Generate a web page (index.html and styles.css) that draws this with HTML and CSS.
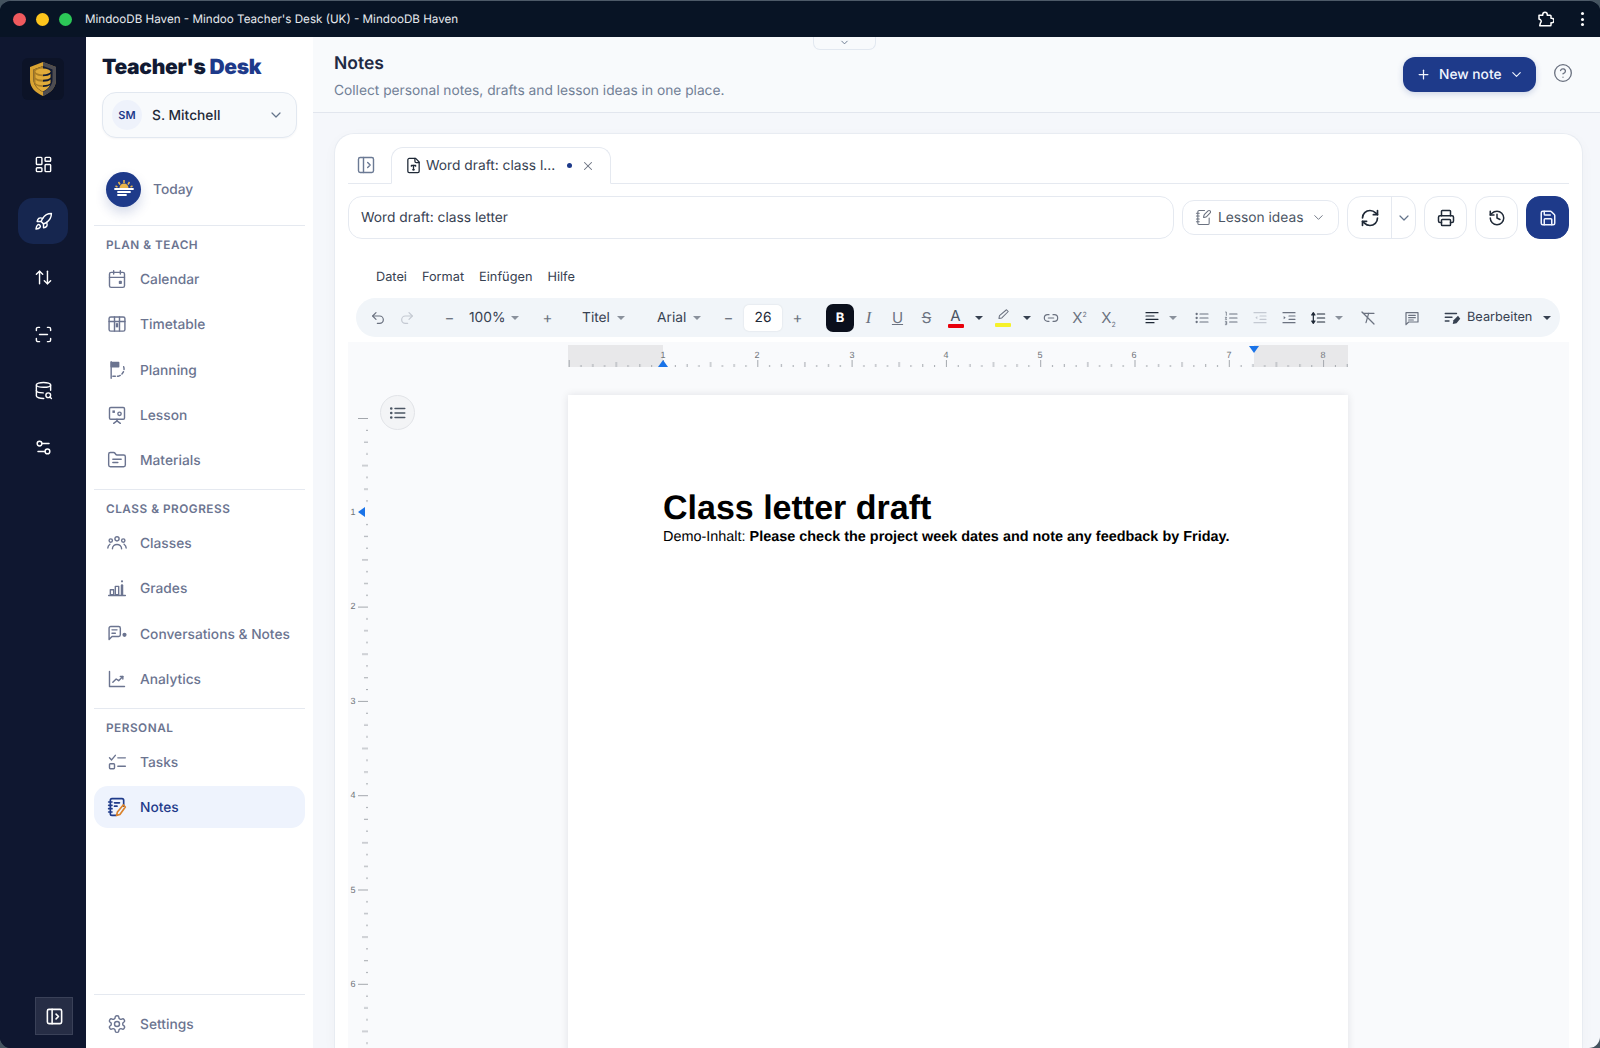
FILE: index.html
```html
<!DOCTYPE html>
<html lang="en">
<head>
    <meta charset="UTF-8">
    <meta name="viewport" content="width=device-width, initial-scale=1.0">
    <title>MindooDB Haven - Mindoo Teacher's Desk (UK) - MindooDB Haven</title>
    <link rel="stylesheet" href="styles.css">
</head>
<body>
<div class="window">
    <div class="titlebar">
        <span class="light red"></span><span class="light yellow"></span><span class="light green"></span>
        <span class="window-title">MindooDB Haven - Mindoo Teacher's Desk (UK) - MindooDB Haven</span>
        <svg class="ext-icon" viewBox="0 0 24 24"><path d="M4 7h5V6a3 3 0 0 1 6 0v1h4a1 1 0 0 1 1 1v3h1a3 3 0 0 1 0 6h-1v3a1 1 0 0 1-1 1H5l1-4a2.500 2.500 0 0 0 0-4l-2-1z"/></svg>
        <span class="kebab"><i></i><i></i><i></i></span>
    </div>
    <div class="app">
        <!-- icon rail -->
        <div class="rail">
            <div class="rail-logo">
                <svg viewBox="0 0 30 36" width="30" height="36">
                    <path d="M15 1 28 6v13c0 8-6 13-13 16C8 32 2 27 2 19V6z" fill="#d9a332"/>
                    <path d="M15 1 28 6v13c0 8-6 13-13 16z" fill="#1d2f5c" opacity=".75"/>
                    <path d="M15 5 24.500 8.500v10c0 6-4.500 10-9.500 12.500-5-2.500-9.500-6.500-9.500-12.500v-10z" fill="#111a33"/>
                    <path d="M5.500 8.500 15 5v26c-5-2.500-9.500-6.500-9.500-12.500z" fill="#a97d26"/>
                    <ellipse cx="15" cy="10.500" rx="7.500" ry="3" fill="#e0ab3a"/>
                    <path d="M7.500 13c2 3 13 3 15 0v3.500c-2 3-13 3-15 0zM7.500 18.500c2 3 13 3 15 0V22c-2 3-13 3-15 0zM8 24c2.500 2.500 11.500 2.500 14 0-1 3-4 5-7 6.500-3-1.500-6-3.500-7-6.500z" fill="#e0ab3a"/>
                </svg>
            </div>
            <div class="rail-items">
                <span class="rail-btn"><svg class="ico" viewBox="0 0 24 24"><rect x="3" y="3" width="7" height="9" rx="1"/><rect x="14" y="3" width="7" height="5" rx="1"/><rect x="14" y="12" width="7" height="9" rx="1"/><rect x="3" y="16" width="7" height="5" rx="1"/></svg></span>
                <span class="rail-btn active"><svg class="ico" viewBox="0 0 24 24"><path d="M4.500 16.500c-1.500 1.260-2 5-2 5s3.740-.5 5-2c.71-.84.7-2.130-.09-2.910a2.180 2.180 0 0 0-2.910-.09z"/><path d="m12 15-3-3a22 22 0 0 1 2-3.950A12.880 12.880 0 0 1 22 2c0 2.720-.78 7.500-6 11a22.350 22.350 0 0 1-4 2z"/><path d="M9 12H4s.55-3.030 2-4c1.620-1.080 5 0 5 0"/><path d="M12 15v5s3.030-.55 4-2c1.080-1.620 0-5 0-5"/></svg></span>
                <span class="rail-btn"><svg class="ico" viewBox="0 0 24 24"><path d="m21 16-4 4-4-4"/><path d="M17 20V4"/><path d="m3 8 4-4 4 4"/><path d="M7 4v16"/></svg></span>
                <span class="rail-btn"><svg class="ico" viewBox="0 0 24 24"><path d="M3 7V5a2 2 0 0 1 2-2h2"/><path d="M17 3h2a2 2 0 0 1 2 2v2"/><path d="M21 17v2a2 2 0 0 1-2 2h-2"/><path d="M7 21H5a2 2 0 0 1-2-2v-2"/><path d="M7 12h10"/></svg></span>
                <span class="rail-btn"><svg class="ico" viewBox="0 0 24 24"><ellipse cx="12" cy="5" rx="9" ry="3"/><path d="M21 11.693V5"/><path d="m22 22-1.875-1.875"/><path d="M3 12a9 3 0 0 0 8.697 2.998"/><path d="M3 5v14a9 3 0 0 0 9.280 2.999"/><circle cx="18" cy="18" r="3"/></svg></span>
                <span class="rail-btn"><svg class="ico" viewBox="0 0 24 24"><path d="M14 17H5"/><path d="M19 7h-9"/><circle cx="17" cy="17" r="3"/><circle cx="7" cy="7" r="3"/></svg></span>
            </div>
            <span class="rail-collapse"><svg class="ico" viewBox="0 0 24 24"><rect x="3" y="3" width="18" height="18" rx="2"/><path d="M9 3v18"/><path d="m14 9 3 3-3 3"/></svg></span>
        </div>

        <!-- sidebar -->
        <div class="sidebar">
            <div class="brand">Teacher's <span>Desk</span></div>
            <div class="account">
                <span class="avatar">SM</span>
                <span class="account-name">S. Mitchell</span>
                <svg class="ico chev" viewBox="0 0 24 24"><path d="m6 9 6 6 6-6"/></svg>
            </div>
            <div class="today">
                <span class="today-icon">
                    <svg viewBox="0 0 24 24" width="24" height="24">
                        <path d="M7.500 11a4.500 4.500 0 0 1 9 0z" fill="#eab64a"/>
                        <path d="M12 3v3M6.500 5l1.500 2.500M17.500 5 16 7.500M3.500 9l2 1M20.500 9l-2 1" stroke="#eab64a" stroke-width="1.500" fill="none"/>
                        <path d="M3 12h18M6 15h12M6 18h8" stroke="#fff" stroke-width="1.800" fill="none" stroke-linecap="round"/>
                    </svg>
                </span>
                <span class="nudge">Today</span>
            </div>

            <div class="nav-section">
                <div class="nav-label">PLAN &amp; TEACH</div>
                <div class="nav-rows">
                    <a class="nav-row"><svg class="ico" viewBox="0 0 24 24"><path d="M8 2v4"/><path d="M16 2v4"/><rect x="3" y="4" width="18" height="18" rx="2"/><path d="M3 10h18"/><rect x="15" y="15" width="2" height="2" fill="currentColor"/></svg><span class="nudge">Calendar</span></a>
                    <a class="nav-row"><svg class="ico" viewBox="0 0 24 24"><rect x="2.500" y="3.500" width="19" height="17" rx="2"/><path d="M2.500 9h19"/><path d="M9 3.500v17"/><path d="M15 3.500v17"/><rect x="10.500" y="11" width="3" height="5" fill="currentColor" stroke="none"/></svg><span class="nudge">Timetable</span></a>
                    <a class="nav-row"><svg class="ico" viewBox="0 0 24 24"><path d="M5 2v20"/><path d="M5 3h9v5H5z" fill="currentColor"/><path d="M20 8a8 8 0 0 1-1.500 8 8 8 0 0 1-5 3.500H7" stroke-dasharray="3.500 2.500"/></svg><span class="nudge">Planning</span></a>
                    <a class="nav-row"><svg class="ico" viewBox="0 0 24 24"><rect x="3" y="3" width="18" height="14" rx="1.500"/><rect x="6.500" y="6.500" width="3" height="3" fill="currentColor" stroke="none"/><circle cx="15" cy="10.500" r="2"/><path d="M12 17v2"/><path d="m8 22 4-3 4 3"/></svg><span class="nudge">Lesson</span></a>
                    <a class="nav-row"><svg class="ico" viewBox="0 0 24 24"><path d="M20 20a2 2 0 0 0 2-2V8a2 2 0 0 0-2-2h-7.900a2 2 0 0 1-1.690-.9L9.600 3.900A2 2 0 0 0 7.930 3H4a2 2 0 0 0-2 2v13a2 2 0 0 0 2 2Z"/><path d="M7 11h10"/><path d="M7 15h6"/></svg><span class="nudge">Materials</span></a>
                </div>
            </div>

            <div class="nav-section">
                <div class="nav-label">CLASS &amp; PROGRESS</div>
                <div class="nav-rows">
                    <a class="nav-row"><svg class="ico" viewBox="0 0 24 24"><circle cx="12" cy="7" r="2.500"/><circle cx="4.500" cy="9" r="2"/><circle cx="19.500" cy="9" r="2"/><path d="M6.500 19c0-7 11-7 11 0"/><path d="M1 18c0-2 1-3.500 2.500-4.500"/><path d="M23 18c0-2-1-3.500-2.500-4.500"/></svg><span class="nudge">Classes</span></a>
                    <a class="nav-row"><svg class="ico" viewBox="0 0 24 24"><path d="M2 21h20"/><rect x="4" y="14" width="4" height="6"/><rect x="10" y="10" width="4" height="10"/><path d="M18 9v11" stroke-width="3"/><circle cx="18" cy="4" r="1.300" fill="currentColor" stroke="none"/></svg><span class="nudge">Grades</span></a>
                    <a class="nav-row"><svg class="ico" viewBox="0 0 24 24"><path d="M16 13a2 2 0 0 1-2 2H6l-3.500 3.500V5a2 2 0 0 1 2-2H14a2 2 0 0 1 2 2z"/><path d="M6 7h6"/><path d="M6 11h4"/><circle cx="21" cy="13" r="2.500" fill="currentColor" stroke="none"/></svg><span class="nudge">Conversations &amp; Notes</span></a>
                    <a class="nav-row"><svg class="ico" viewBox="0 0 24 24"><path d="M3 3v18h18"/><path d="m7 16 4-4 3 2 5-5"/><path d="M16 9h3v3"/></svg><span class="nudge">Analytics</span></a>
                </div>
            </div>

            <div class="nav-section">
                <div class="nav-label">PERSONAL</div>
                <div class="nav-rows">
                    <a class="nav-row"><svg class="ico" viewBox="0 0 24 24"><path d="m3 7 2.500 2.500L10 4"/><rect x="3" y="14" width="6" height="6" rx="1"/><path d="M13 7h9"/><path d="M13 17h9"/></svg><span class="nudge">Tasks</span></a>
                    <a class="nav-row active"><svg class="ico" viewBox="0 0 24 24"><path d="M20 11V4a2 2 0 0 0-2-2H6a2 2 0 0 0-2 2v16a2 2 0 0 0 2 2h5"/><path d="M2 6h4"/><path d="M2 10h4"/><path d="M2 14h4"/><path d="M2 18h4"/><path d="M9 7h6"/><path d="M9 11h3"/><path d="m22 12-2.500-2.500L12.500 18l-1 4 4-1z" stroke="#d9822b"/></svg><span class="nudge">Notes</span></a>
                </div>
            </div>

            <div class="side-footer">
                <a class="nav-row"><svg class="ico" viewBox="0 0 24 24"><path d="M12.220 2h-.44a2 2 0 0 0-2 2v.18a2 2 0 0 1-1 1.730l-.43.25a2 2 0 0 1-2 0l-.15-.08a2 2 0 0 0-2.730.73l-.22.38a2 2 0 0 0 .73 2.730l.15.1a2 2 0 0 1 1 1.720v.51a2 2 0 0 1-1 1.740l-.15.09a2 2 0 0 0-.73 2.730l.22.38a2 2 0 0 0 2.730.73l.15-.08a2 2 0 0 1 2 0l.43.25a2 2 0 0 1 1 1.730V20a2 2 0 0 0 2 2h.44a2 2 0 0 0 2-2v-.18a2 2 0 0 1 1-1.730l.43-.25a2 2 0 0 1 2 0l.15.08a2 2 0 0 0 2.730-.73l.22-.39a2 2 0 0 0-.73-2.730l-.15-.08a2 2 0 0 1-1-1.740v-.5a2 2 0 0 1 1-1.740l.15-.09a2 2 0 0 0 .73-2.730l-.22-.38a2 2 0 0 0-2.730-.73l-.15.08a2 2 0 0 1-2 0l-.43-.25a2 2 0 0 1-1-1.730V4a2 2 0 0 0-2-2z"/><circle cx="12" cy="12" r="3"/></svg><span class="nudge">Settings</span></a>
            </div>
        </div>

        <!-- main area -->
        <div class="main">
            <span class="notch"><svg class="ico" viewBox="0 0 24 24"><path d="m6 9 6 6 6-6"/></svg></span>
            <div class="header">
                <div class="header-text">
                    <div class="page-title">Notes</div>
                    <div class="page-sub">Collect personal notes, drafts and lesson ideas in one place.</div>
                </div>
                <div class="new-note">
                    <svg class="ico plus" viewBox="0 0 24 24"><path d="M5 12h14"/><path d="M12 5v14"/></svg>
                    <span class="nudge">New note</span>
                    <svg class="ico chev" viewBox="0 0 24 24"><path d="m6 9 6 6 6-6"/></svg>
                </div>
                <svg class="ico help" viewBox="0 0 24 24"><circle cx="12" cy="12" r="10"/><path d="M9.090 9a3 3 0 0 1 5.830 1c0 2-3 3-3 3"/><path d="M12 17h.01"/></svg>
            </div>

            <div class="card">
                <div class="tabstrip">
                    <svg class="ico tab-toggle" viewBox="0 0 24 24"><rect x="3" y="3" width="18" height="18" rx="2"/><path d="M9 3v18"/><path d="m14 9 3 3-3 3"/></svg>
                    <div class="tab">
                        <svg class="ico" viewBox="0 0 24 24"><path d="M15 2H6a2 2 0 0 0-2 2v16a2 2 0 0 0 2 2h12a2 2 0 0 0 2-2V7Z"/><path d="M14 2v4a2 2 0 0 0 2 2h4"/><path d="M9 13v-1h6v1"/><path d="M12 12v6"/><path d="M11 18h2"/></svg>
                        <span class="tab-name">Word draft: class l...</span>
                        <span class="tab-dot"></span>
                        <svg class="ico tab-close" viewBox="0 0 24 24"><path d="M18 6 6 18"/><path d="m6 6 12 12"/></svg>
                    </div>
                </div>

                <div class="title-row">
                    <div class="title-input">Word draft: class letter</div>
                    <div class="category">
                        <svg class="ico" viewBox="0 0 24 24"><path d="M13.400 2H6a2 2 0 0 0-2 2v16a2 2 0 0 0 2 2h12a2 2 0 0 0 2-2v-7.400"/><path d="M2 6h4"/><path d="M2 10h4"/><path d="M2 14h4"/><path d="M2 18h4"/><path d="M21.378 5.626a1 1 0 1 0-3.004-3.004l-5.010 5.012a2 2 0 0 0-.506.854l-.837 2.870a.5.5 0 0 0 .62.62l2.870-.837a2 2 0 0 0 .854-.506z"/></svg>
                        <span>Lesson ideas</span>
                        <svg class="ico chev" viewBox="0 0 24 24"><path d="m6 9 6 6 6-6"/></svg>
                    </div>
                    <div class="split">
                        <span class="split-main"><svg class="ico" viewBox="0 0 24 24"><path d="M3 12a9 9 0 0 1 9-9 9.750 9.750 0 0 1 6.740 2.740L21 8"/><path d="M21 3v5h-5"/><path d="M21 12a9 9 0 0 1-9 9 9.750 9.750 0 0 1-6.740-2.740L3 16"/><path d="M8 16H3v5"/></svg></span>
                        <span class="split-arrow"><svg class="ico chev" viewBox="0 0 24 24"><path d="m6 9 6 6 6-6"/></svg></span>
                    </div>
                    <span class="square-btn"><svg class="ico" viewBox="0 0 24 24"><path d="M6 18H4a2 2 0 0 1-2-2v-5a2 2 0 0 1 2-2h16a2 2 0 0 1 2 2v5a2 2 0 0 1-2 2h-2"/><path d="M6 9V3a1 1 0 0 1 1-1h10a1 1 0 0 1 1 1v6"/><rect x="6" y="14" width="12" height="8" rx="1"/></svg></span>
                    <span class="square-btn"><svg class="ico" viewBox="0 0 24 24"><path d="M3 12a9 9 0 1 0 9-9 9.750 9.750 0 0 0-6.740 2.740L3 8"/><path d="M3 3v5h5"/><path d="M12 7v5l4 2"/></svg></span>
                    <span class="square-btn save"><svg class="ico" viewBox="0 0 24 24"><path d="M15.200 3a2 2 0 0 1 1.400.6l3.800 3.800a2 2 0 0 1 .6 1.400V19a2 2 0 0 1-2 2H5a2 2 0 0 1-2-2V5a2 2 0 0 1 2-2z"/><path d="M17 21v-7a1 1 0 0 0-1-1H8a1 1 0 0 0-1 1v7"/><path d="M7 3v4a1 1 0 0 0 1 1h7"/></svg></span>
                </div>

                <div class="menubar">
                    <span>Datei</span><span>Format</span><span>Einfügen</span><span>Hilfe</span>
                </div>

                <div class="toolbar">
                    <span class="tb"><svg class="ico" viewBox="0 0 24 24"><path d="M9 14 4 9l5-5"/><path d="M4 9h10.500a5.500 5.500 0 0 1 0 11H11"/></svg></span>
                    <span class="tb off"><svg class="ico" viewBox="0 0 24 24"><path d="m15 14 5-5-5-5"/><path d="M20 9H9.500a5.500 5.500 0 0 0 0 11H13"/></svg></span>
                    <span class="tb sign g14">−</span>
                    <span class="dd dd-zoom">100%<i class="caret"></i></span>
                    <span class="tb sign">+</span>
                    <span class="dd dd-style">Titel<i class="caret"></i></span>
                    <span class="dd dd-font">Arial<i class="caret"></i></span>
                    <span class="tb sign">−</span>
                    <span class="size-input">26</span>
                    <span class="tb sign">+</span>
                    <span class="bold-btn">B</span>
                    <span class="tb glyph italic">I</span>
                    <span class="tb glyph underline">U</span>
                    <span class="tb glyph strike">S</span>
                    <span class="tb color-a">A<i></i></span>
                    <span class="tb-caret"><i class="caret dark"></i></span>
                    <span class="tb hl"><svg class="ico" viewBox="0 0 24 24"><path d="M18 3 21 6 10 17l-5 1 1-5z"/></svg><i></i></span>
                    <span class="tb-caret wide"><i class="caret dark"></i></span>
                    <span class="tb"><svg class="ico" viewBox="0 0 24 24"><path d="M9 17H7A5 5 0 0 1 7 7h2"/><path d="M15 7h2a5 5 0 1 1 0 10h-2"/><path d="M8 12h8"/></svg></span>
                    <span class="tb glyph script"><span>X<sup>2</sup></span></span>
                    <span class="tb glyph script"><span>X<sub>2</sub></span></span>
                    <span class="tb dark-ico g14"><svg class="ico" viewBox="0 0 24 24"><path d="M3 4h18M3 9h12M3 14h18M3 19h12"/></svg></span>
                    <span class="tb-caret tight"><i class="caret"></i></span>
                    <span class="tb g7"><svg class="ico" viewBox="0 0 24 24"><path d="M9 6h12M9 12h12M9 18h12"/><path d="M4 6h.01M4 12h.01M4 18h.01" stroke-width="3.500"/></svg></span>
                    <span class="tb"><svg class="ico" viewBox="0 0 24 24"><path d="M10 6h11M10 12h11M10 18h11"/><path d="M4 3h1v5M3.500 11h2L3.500 14h2M3.500 17h2v5h-2M3.500 19.500h2" stroke-width="1.200"/></svg></span>
                    <span class="tb off"><svg class="ico" viewBox="0 0 24 24"><path d="M3 4h18M12 9h9M12 14h9M3 19h18"/><path d="M8 9l-3 2.500L8 14z" fill="currentColor" stroke="none"/></svg></span>
                    <span class="tb"><svg class="ico" viewBox="0 0 24 24"><path d="M3 4h18M12 9h9M12 14h9M3 19h18"/><path d="M4 9l3 2.500L4 14z" fill="currentColor" stroke="none"/></svg></span>
                    <span class="tb dark-ico"><svg class="ico" viewBox="0 0 24 24"><path d="M11 6h11M11 12h11M11 18h11"/><path d="M5 5v14"/><path d="M2.500 7.500 5 4l2.500 3.500z M2.500 16.500 5 20l2.500-3.500z" fill="currentColor"/></svg></span>
                    <span class="tb-caret tight"><i class="caret"></i></span>
                    <span class="tb g7"><svg class="ico" viewBox="0 0 24 24"><path d="M5 5h16"/><path d="M13 5 9 19"/><path d="m3 3 18 18"/></svg></span>
                    <span class="tb g15"><svg class="ico" viewBox="0 0 24 24"><path d="M21 4H3v18l4-4h14z"/><path d="M7 8h10M7 11.500h10M7 15h7"/></svg></span>
                    <span class="edit-mode">
                        <svg class="ico" viewBox="0 0 24 24"><path d="M3 6h15M3 11h9M3 16h5"/><path d="M20 9 14 15l-1 5 5-1 5-6z" fill="currentColor" stroke="none"/></svg>
                        <span>Bearbeiten</span>
                        <i class="caret dark"></i>
                    </span>
                </div>

                <div class="editor">
                    <svg class="h-ruler" viewBox="348 342 1221 25" width="1221" height="25">
                        <defs>
                            <pattern id="h-ticks" patternUnits="userSpaceOnUse" x="663" y="342" width="94.300" height="25">
                                <rect x="0" y="18" width="1" height="7" fill="#a3a7ad"/>
                                <rect x="11.800" y="23" width="1" height="2" fill="#a3a7ad"/>
                                <rect x="23.600" y="22" width="1" height="3" fill="#a3a7ad"/>
                                <rect x="35.400" y="23" width="1" height="2" fill="#a3a7ad"/>
                                <rect x="47.100" y="20" width="1" height="5" fill="#a3a7ad"/>
                                <rect x="58.900" y="23" width="1" height="2" fill="#a3a7ad"/>
                                <rect x="70.700" y="22" width="1" height="3" fill="#a3a7ad"/>
                                <rect x="82.500" y="23" width="1" height="2" fill="#a3a7ad"/>
                            </pattern>
                        </defs>
                        <rect x="568" y="345" width="95" height="22" fill="#e8e8ea"/>
                        <rect x="1254" y="345" width="94" height="22" fill="#e8e8ea"/>
                        <rect x="568" y="342" width="780" height="25" fill="url(#h-ticks)"/>
                        <g class="ruler-num" text-anchor="middle">
                            <text x="663" y="358">1</text><text x="757" y="358">2</text><text x="852" y="358">3</text><text x="946" y="358">4</text><text x="1040" y="358">5</text><text x="1134" y="358">6</text><text x="1229" y="358">7</text><text x="1323" y="358">8</text>
                        </g>
                        <path d="M663 360l5 7h-10z" fill="#1a73e8"/>
                        <path d="M1254 353l-5-7h10z" fill="#1a73e8"/>
                    </svg>
                    <div class="doc-row">
                        <svg class="v-ruler" viewBox="348 395 22 660" width="22" height="660">
                            <defs>
                                <pattern id="v-ticks" patternUnits="userSpaceOnUse" x="348" y="418" width="22" height="94.300">
                                    <rect x="10" y="0" width="10" height="1" fill="#a3a7ad"/>
                                    <rect x="18" y="11.800" width="2" height="1" fill="#a3a7ad"/>
                                    <rect x="16" y="23.600" width="4" height="1" fill="#a3a7ad"/>
                                    <rect x="18" y="35.400" width="2" height="1" fill="#a3a7ad"/>
                                    <rect x="14" y="47.100" width="6" height="1" fill="#a3a7ad"/>
                                    <rect x="18" y="58.900" width="2" height="1" fill="#a3a7ad"/>
                                    <rect x="16" y="70.700" width="4" height="1" fill="#a3a7ad"/>
                                    <rect x="18" y="82.500" width="2" height="1" fill="#a3a7ad"/>
                                </pattern>
                            </defs>
                            <rect x="348" y="418" width="22" height="640" fill="url(#v-ticks)"/>
                            <g class="ruler-num" text-anchor="middle">
                                <text x="353" y="515">1</text><text x="353" y="609">2</text><text x="353" y="704">3</text><text x="353" y="798">4</text><text x="353" y="893">5</text><text x="353" y="987">6</text>
                            </g>
                            <rect x="356" y="505" width="14" height="14" fill="#f9fafc"/>
                            <path d="M358 512l7-5v10z" fill="#1a73e8"/>
                        </svg>
                        <span class="outline-btn"><svg class="ico" viewBox="0 0 24 24"><path d="M8 6h13M8 12h13M8 18h13"/><path d="M3 6h.01M3 12h.01M3 18h.01" stroke-width="3.500"/></svg></span>
                        <div class="page">
                            <h1>Class letter draft</h1>
                            <p>Demo-Inhalt: <strong>Please check the project week dates and note any feedback by Friday.</strong></p>
                        </div>
                    </div>
                </div>
            </div>
        </div>
    </div>
</div>
</body>
</html>
```
FILE: styles.css
```css
* {
    box-sizing: border-box;
}
html, body {
    height: 100%;
}
body {
    margin: 0;
    background: #44535f;
    font-family: Inter, "Noto Sans", sans-serif;
    text-rendering: geometricPrecision;
    overflow: hidden;
}
.window {
    height: 100vh;
    display: flex;
    flex-direction: column;
    border-radius: 11px;
    border-top: 1px solid #4d5a68;
    overflow: hidden;
    background: #081425;
}
.ico {
    width: 20px;
    height: 20px;
    fill: none;
    stroke: currentColor;
    stroke-width: 2;
    stroke-linecap: round;
    stroke-linejoin: round;
    flex-shrink: 0;
}
/* Inter sits a touch high in centred rows */
.nudge {
    padding-top: 2px;
}

/* title bar */
.titlebar {
    height: 36px;
    display: flex;
    align-items: center;
    padding: 0 12px 0 13px;
    background: #081425;
    color: #e6e9ee;
    flex-shrink: 0;
}
.light {
    width: 13px;
    height: 13px;
    border-radius: 50%;
    margin-right: 10px;
}
.light.red { background: #f05a5e; }
.light.yellow { background: #fdc51c; }
.light.green { background: #2cc757; }
.window-title {
    font-size: 11.650px;
    margin-left: 3px;
    white-space: nowrap;
}
.ext-icon {
    width: 18px;
    height: 18px;
    margin-left: auto;
    fill: none;
    stroke: #fff;
    stroke-width: 2;
    stroke-linejoin: round;
}
.kebab {
    display: flex;
    flex-direction: column;
    gap: 2.500px;
    margin: 0 4px 0 27px;
}
.kebab i {
    width: 3px;
    height: 3px;
    border-radius: 50%;
    background: #fff;
}

.app {
    flex: 1;
    display: flex;
    min-height: 0;
}

/* rail */
.rail {
    width: 86px;
    background: #0f1730;
    display: flex;
    flex-direction: column;
    align-items: center;
    flex-shrink: 0;
}
.rail-logo {
    width: 42px;
    height: 42px;
    margin-top: 21px;
    background: #0c1327;
    border-radius: 6px;
    display: flex;
    align-items: center;
    justify-content: center;
}
.rail-items {
    margin-top: 41.500px;
    display: flex;
    flex-direction: column;
    gap: 10.600px;
    color: #fff;
}
.rail-btn {
    width: 50px;
    height: 46px;
    display: flex;
    align-items: center;
    justify-content: center;
    border-radius: 15px;
}
.rail-btn .ico {
    width: 19px;
    height: 19px;
    stroke-width: 1.800;
}
.rail-btn.active {
    background: #16264f;
}
.rail-collapse {
    margin: auto 0 13px 22px;
    width: 38px;
    height: 38px;
    display: flex;
    align-items: center;
    justify-content: center;
    background: #262d45;
    border: 1px solid #3a4158;
    color: #fff;
}
.rail-collapse .ico {
    width: 19px;
    height: 19px;
}

/* sidebar */
.sidebar {
    width: 227px;
    padding: 0 8px;
    background: #fff;
    display: flex;
    flex-direction: column;
    flex-shrink: 0;
    box-shadow: 1px 0 0 #eef1f6;
}
.brand {
    margin: 17px 0 0 8px;
    font-size: 21px;
    line-height: 28px;
    font-weight: 900;
    letter-spacing: -0.300px;
    color: #111a33;
    white-space: nowrap;
}
.brand span {
    color: #1e3a8a;
}
.account {
    margin: 10px 8px 0;
    height: 46px;
    display: flex;
    align-items: center;
    padding: 0 12px 0 9px;
    background: #f8fafc;
    border: 1px solid #e2e8f0;
    border-radius: 14px;
    box-shadow: 0 1px 2px rgba(15, 23, 42, 0.04);
}
.avatar {
    width: 30px;
    height: 30px;
    border-radius: 50%;
    background: #eef2fb;
    color: #1e3a8a;
    font-size: 11px;
    font-weight: 600;
    display: flex;
    align-items: center;
    justify-content: center;
}
.account-name {
    margin-left: 10px;
    padding-top: 1px;
    font-size: 13.750px;
    font-weight: 450;
    color: #1f2937;
    flex: 1;
}
.chev {
    width: 16px;
    height: 16px;
    color: #64748b;
    stroke-width: 1.800;
}
.today {
    margin: 30px 0 15px 12px;
    height: 42px;
    display: flex;
    align-items: center;
    gap: 12px;
    font-size: 13.750px;
    font-weight: 500;
    color: #6b7490;
}
.today-icon {
    width: 35px;
    height: 35px;
    border-radius: 50%;
    background: #1e3a8a;
    display: flex;
    align-items: center;
    justify-content: center;
    box-shadow: 0 6px 12px rgba(30, 58, 138, 0.18);
}
.nav-section {
    border-top: 1px solid #e5e9f0;
    padding: 11px 0 8px;
}
.nav-label {
    padding-left: 12px;
    font-size: 11.800px;
    line-height: 16px;
    font-weight: 600;
    letter-spacing: 0.500px;
    color: #6b7490;
    margin-bottom: 5px;
}
.nav-rows {
    display: flex;
    flex-direction: column;
    gap: 3.250px;
}
.nav-row {
    height: 42px;
    padding-left: 13px;
    display: flex;
    align-items: center;
    gap: 13px;
    font-size: 13.750px;
    font-weight: 500;
    color: #6b7490;
    border-radius: 14px;
    white-space: nowrap;
}
.nav-row .ico {
    stroke-width: 1.700;
}
.nav-row.active {
    background: #eef3fd;
    color: #1e3a8a;
}
.nav-row.active .ico {
    stroke-width: 2;
}
.side-footer {
    margin-top: auto;
    border-top: 1px solid #e5e9f0;
    padding: 8px 0 3px;
}

/* main */
.main {
    flex: 1;
    min-width: 0;
    position: relative;
    display: flex;
    flex-direction: column;
    background: #f5f7fb;
}
.notch {
    position: absolute;
    left: 500px;
    top: 0;
    width: 63px;
    height: 13px;
    background: #f8fafc;
    border: 1px solid #e2e8f0;
    border-top: none;
    border-radius: 0 0 7px 7px;
    display: flex;
    justify-content: center;
    color: #64748b;
}
.notch .ico {
    width: 11px;
    height: 11px;
}
.header {
    height: 76px;
    flex-shrink: 0;
    display: flex;
    align-items: center;
    padding: 0 27px 0 21px;
    border-bottom: 1px solid #e2e6ee;
    background: #f8fafc;
}
.header-text {
    flex: 1;
    padding-top: 2px;
}
.page-title {
    font-size: 17.500px;
    line-height: 24px;
    font-weight: 600;
    color: #1f2a44;
}
.page-sub {
    margin-top: 6px;
    font-size: 13.750px;
    line-height: 18px;
    color: #718096;
}
.new-note {
    width: 133px;
    height: 35px;
    margin-top: -1px;
    border-radius: 12px;
    background: #1e3a8a;
    color: #f1f5ff;
    display: flex;
    align-items: center;
    padding: 0 12px 0 13px;
    font-size: 13.750px;
    font-weight: 500;
    box-shadow: 0 2px 6px rgba(30, 58, 138, 0.2);
}
.new-note .plus {
    width: 15px;
    height: 15px;
    margin-right: 8px;
}
.new-note .chev {
    margin-left: auto;
    color: #f1f5ff;
    width: 15px;
    height: 15px;
}
.help {
    margin: -3px 0 0 17px;
    width: 20px;
    height: 20px;
    color: #6b7280;
    stroke-width: 1.600;
}

/* editor card */
.card {
    flex: 1;
    min-height: 0;
    margin: 20px 17px 0 21px;
    padding: 0 13px;
    background: #fff;
    border: 1px solid #e8ecf2;
    border-bottom: none;
    border-radius: 20px 20px 0 0;
    display: flex;
    flex-direction: column;
    box-shadow: 0 4px 14px rgba(15, 23, 42, 0.03);
}
.tabstrip {
    height: 50px;
    flex-shrink: 0;
    display: flex;
    align-items: flex-end;
    border-bottom: 1px solid #e5e9f0;
}
.tab-toggle {
    width: 20px;
    height: 20px;
    margin: 0 0 8px 8px;
    color: #6b7a94;
    stroke-width: 1.700;
}
.tab {
    margin-left: 15px;
    margin-bottom: -1px;
    width: 220px;
    height: 37px;
    display: flex;
    align-items: center;
    padding-left: 13px;
    background: #fff;
    border: 1px solid #e5e9f0;
    border-bottom-color: #fff;
    border-radius: 12px 12px 0 0;
    font-size: 13.750px;
    color: #374151;
}
.tab .ico {
    width: 17px;
    height: 17px;
    stroke-width: 1.800;
    color: #1f2937;
}
.tab-name {
    margin-left: 4px;
    white-space: nowrap;
}
.tab-dot {
    width: 5px;
    height: 5px;
    border-radius: 50%;
    background: #1e3a8a;
    margin-left: 12px;
}
.tab .tab-close {
    width: 14px;
    height: 14px;
    margin-left: 9px;
    color: #6b7280;
}
.title-row {
    margin-top: 12px;
    height: 43px;
    flex-shrink: 0;
    display: flex;
    align-items: center;
    gap: 8px;
}
.title-input {
    flex: 1;
    height: 43px;
    line-height: 42px;
    padding-left: 12px;
    border: 1px solid #e5e9f0;
    border-radius: 14px;
    font-size: 13.750px;
    color: #374151;
}
.category {
    width: 157px;
    height: 35px;
    flex-shrink: 0;
    display: flex;
    align-items: center;
    padding: 0 12px;
    gap: 6px;
    border: 1px solid #e5e9f0;
    border-radius: 12px;
    font-size: 13.750px;
    color: #4b5563;
    white-space: nowrap;
}
.category .ico {
    width: 17px;
    height: 17px;
    stroke-width: 1.500;
    color: #6b7280;
}
.category .chev {
    width: 15px;
    height: 15px;
    margin-left: auto;
}
.split {
    width: 69px;
    height: 43px;
    flex-shrink: 0;
    display: flex;
    border: 1px solid #e5e9f0;
    border-radius: 14px;
}
.split-main {
    width: 44px;
    display: flex;
    align-items: center;
    justify-content: center;
    border-right: 1px solid #e5e9f0;
    color: #1f2937;
}
.split-arrow {
    flex: 1;
    display: flex;
    align-items: center;
    justify-content: center;
}
.split-main .ico {
    width: 20px;
    height: 20px;
}
.square-btn {
    width: 43px;
    height: 43px;
    flex-shrink: 0;
    display: flex;
    align-items: center;
    justify-content: center;
    border: 1px solid #e5e9f0;
    border-radius: 14px;
    color: #1f2937;
}
.square-btn .ico {
    width: 18px;
    height: 18px;
}
.square-btn.save {
    background: #1e3a8a;
    border-color: #1e3a8a;
    color: #f1f5ff;
}
.menubar {
    margin-top: 29px;
    padding-left: 28px;
    display: flex;
    gap: 15px;
    font-size: 12.750px;
    line-height: 20px;
    color: #374151;
    flex-shrink: 0;
}

/* document toolbar */
.toolbar {
    margin: 10px 9px 0 8px;
    height: 39px;
    flex-shrink: 0;
    padding-left: 7px;
    display: flex;
    align-items: center;
    background: #f1f5f9;
    border-radius: 20px;
    color: #4b5563;
    font-size: 13.750px;
}
.tb {
    width: 29px;
    height: 27px;
    display: flex;
    align-items: center;
    justify-content: center;
    flex-shrink: 0;
    color: #6b7280;
}
.tb .ico {
    width: 16px;
    height: 16px;
    stroke-width: 1.800;
}
.tb.off { color: #c4c9d2; }
.tb.dark-ico { color: #1f2937; }
.g7 { margin-left: 7px; }
.g14 { margin-left: 14px; }
.g15 { margin-left: 15px; }
.sign {
    font-size: 15px;
    color: #6b7280;
}
.dd {
    display: flex;
    align-items: center;
    color: #374151;
    white-space: nowrap;
    flex-shrink: 0;
}
.dd-zoom { width: 69px; padding-left: 5px; gap: 6px; }
.dd-style { width: 75px; margin-left: 20px; gap: 7px; }
.dd-font { width: 57px; gap: 7px; }
.caret {
    width: 0;
    height: 0;
    border-left: 4px solid transparent;
    border-right: 4px solid transparent;
    border-top: 4px solid #8a919c;
    display: block;
}
.caret.dark { border-top-color: #374151; }
.size-input {
    width: 38px;
    height: 26px;
    margin: 0 1px 0 1px;
    line-height: 26px;
    text-align: center;
    background: #fff;
    border-radius: 5px;
    color: #1f2937;
    box-shadow: 0 0 2px rgba(15, 23, 42, 0.12);
    flex-shrink: 0;
}
.bold-btn {
    width: 28px;
    height: 28px;
    margin: 0 0 0 14px;
    border-radius: 7px;
    background: #0a0f1c;
    color: #fff;
    font-weight: 700;
    font-size: 13px;
    display: flex;
    align-items: center;
    justify-content: center;
    flex-shrink: 0;
}
.glyph {
    font-size: 15px;
    font-weight: 400;
}
.italic {
    font-family: "Liberation Serif", serif;
    font-style: italic;
    font-size: 17px;
}
.underline { text-decoration: underline; }
.strike { text-decoration: line-through; }
.script sup, .script sub {
    font-size: 7px;
    line-height: 0;
}
.color-a {
    flex-direction: column;
    font-size: 15px;
    line-height: 15px;
    color: #4b5563;
}
.color-a i, .hl i {
    display: block;
    width: 16px;
    height: 4px;
    margin-top: 1px;
    background: #e8000b;
    border-radius: 1px;
}
.hl {
    flex-direction: column;
}
.tb.hl .ico {
    height: 14px;
}
.hl i {
    background: #f5f12a;
}
.tb-caret {
    width: 18px;
    display: flex;
    justify-content: center;
    flex-shrink: 0;
}
.tb-caret.wide {
    width: 19px;
}
.tb-caret.tight {
    width: 14px;
}
.edit-mode {
    margin-left: 17px;
    display: flex;
    align-items: center;
    gap: 6px;
    font-size: 12.750px;
    color: #374151;
    white-space: nowrap;
}
.edit-mode .ico {
    width: 18px;
    height: 18px;
    stroke-width: 1.800;
}
.edit-mode .caret {
    margin-left: 5px;
}

/* document area */
.editor {
    flex: 1;
    min-height: 0;
    margin-top: 5px;
    background: #f9fafc;
    overflow: hidden;
}
.h-ruler, .v-ruler {
    display: block;
    flex-shrink: 0;
}
.ruler-num {
    font-family: "Liberation Sans", Arial, sans-serif;
    font-size: 9px;
    fill: #70757a;
}
.doc-row {
    position: relative;
    display: flex;
    margin-top: 28px;
}
.outline-btn {
    position: absolute;
    left: 32px;
    top: 0;
    width: 35px;
    height: 35px;
    border-radius: 50%;
    background: #f3f4f6;
    border: 1px solid #e2e4e8;
    color: #4b5563;
    display: flex;
    align-items: center;
    justify-content: center;
}
.outline-btn .ico {
    width: 18px;
    height: 18px;
}
.page {
    width: 780px;
    height: 660px;
    margin-left: 198px;
    padding: 93px 95px 0;
    background: #fff;
    box-shadow: 0 0 8px rgba(15, 23, 42, 0.1);
    font-family: "Liberation Sans", Arial, sans-serif;
    color: #000;
}
.page h1 {
    margin: 0;
    font-size: 34px;
    line-height: 41px;
    font-weight: 700;
}
.page p {
    margin: 0;
    font-size: 14.430px;
    line-height: 17px;
    white-space: nowrap;
}
```
